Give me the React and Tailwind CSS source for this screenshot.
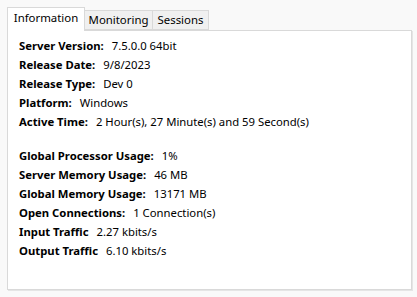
import React, { useState } from 'react';

const general = [
  ['Server Version:', '7.5.0.0 64bit'],
  ['Release Date:', '9/8/2023'],
  ['Release Type:', 'Dev 0'],
  ['Platform:', 'Windows'],
  ['Active Time:', '2 Hour(s), 27 Minute(s) and 59 Second(s)'],
];

const usage = [
  ['Global Processor Usage:', '1%'],
  ['Server Memory Usage:', '46 MB'],
  ['Global Memory Usage:', '13171 MB'],
  ['Open Connections:', '1 Connection(s)'],
  ['Input Traffic', '2.27 kbits/s'],
  ['Output Traffic', '6.10 kbits/s'],
];

// widths taken from the native tab strip
const tabs = [
  { name: 'Information', width: 'w-[78px]' },
  { name: 'Monitoring', width: 'w-[68px]' },
  { name: 'Sessions', width: 'w-[56px]' },
];

const Row = ({ label, value }) => (
  <div className="flex h-[19px] items-center whitespace-nowrap">
    <span className="font-bold">{label}</span>
    <span className="ml-[8px]">{value}</span>
  </div>
);

const App = () => {
  const [active, setActive] = useState('Information');

  return (
    <div
      className="h-[297px] w-[417px] bg-[#f9f9f9] pt-[7px] pl-[7px] text-[11.3px] text-black"
      style={{ fontFamily: '"Segoe UI", "Noto Sans", sans-serif' }}
    >
      {/* Tabs */}
      <div className="flex items-end">
        {tabs.map(({ name, width }) => {
          const isActive = name === active;
          return (
            <button
              key={name}
              onClick={() => setActive(name)}
              className={
                isActive
                  ? `relative z-10 -mb-px h-[24px] ${width} border border-b-0 border-[#d9d9d9] bg-white pb-[3px] text-center text-[11.4px] leading-none`
                  : `h-[20px] ${width} border border-l-0 border-[#d9d9d9] bg-[#f0f0f0] text-center text-[11.4px] leading-none`
              }
            >
              {name}
            </button>
          );
        })}
      </div>

      {/* Panel */}
      <div className="h-[260px] w-[405px] border border-[#d9d9d9] bg-white px-[11px] pt-[6px] shadow-[1px_1px_0_#e5e5e5]">
        {general.map(([label, value]) => (
          <Row key={label} label={label} value={value} />
        ))}
        <div className="h-[15px]" />
        {usage.map(([label, value]) => (
          <Row key={label} label={label} value={value} />
        ))}
      </div>
    </div>
  );
};

export default App;
